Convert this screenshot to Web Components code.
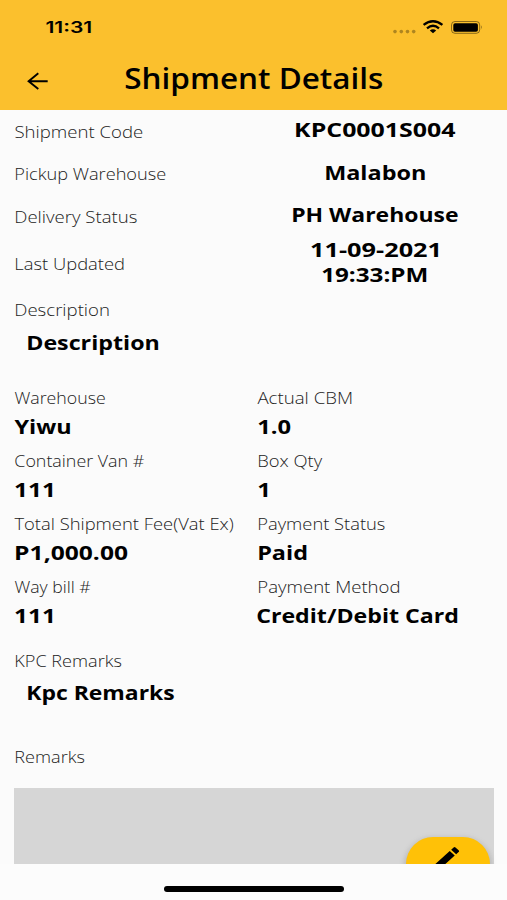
<!DOCTYPE html>
<html lang="en">
<head>
<meta charset="utf-8">
<title>Shipment Details</title>
<style>
html,body{margin:0;height:100%;background:#fbfbfb;overflow:hidden}
body{font-family:"Open Sans","Noto Sans",sans-serif;color:#000}
</style>
</head>
<body>
<shipment-app></shipment-app>
<script>
const define = (name, html, setup) => customElements.define(name, class extends HTMLElement {
  constructor() {
    super();
    this.attachShadow({mode: 'open'}).innerHTML = html;
  }
  connectedCallback() { if (setup) setup.call(this, this.shadowRoot); }
});

/* A line of text condensed or extended horizontally to the width in `w`. */
const ctx = document.createElement('canvas').getContext('2d');
define('fit-text', `<style>
:host{display:block;white-space:nowrap;flex:none;font-size:16.4px;font-weight:300;line-height:20px;color:#222}
:host([kind=value]){font-size:19px;font-weight:700;line-height:25px;color:#000}
:host([kind=title]){font-size:29px;font-weight:600;line-height:40px;color:#000}
:host([kind=clock]){font:600 16px/20px Inter,sans-serif;color:#000}
span{display:inline-block;transform-origin:0 50%}
</style><span></span>`, function (root) {
  const span = root.querySelector('span');
  const text = this.getAttribute('text');
  const w = +this.getAttribute('w');
  span.textContent = text;
  const cs = getComputedStyle(this);
  ctx.font = `${cs.fontWeight} ${cs.fontSize} ${cs.fontFamily}`;
  const m = ctx.measureText(text);
  const scale = (w - .7) / (m.actualBoundingBoxLeft + m.actualBoundingBoxRight);
  this.style.width = w + 'px';
  this.style.marginLeft = (this.getAttribute('x') || 0) + 'px';
  span.style.transform = `translateX(${m.actualBoundingBoxLeft * scale + .4}px) scaleX(${scale})`;
});

define('status-bar', `<style>
:host{display:flex;height:54px;padding:0 24px 0 45px;box-sizing:border-box;align-items:center;justify-content:space-between}
div{display:flex;align-items:center}
svg{display:block}
</style>
<fit-text kind="clock" text="11:31" w="46.5"></fit-text>
<div><svg width="92" height="20" viewBox="0 0 92 20">
<g fill="#000" opacity=".3"><circle cx="4" cy="14.6" r="1.8"/><circle cx="10.3" cy="14.6" r="1.8"/><circle cx="16.5" cy="14.6" r="1.8"/><circle cx="22.7" cy="14.6" r="1.8"/></g>
<g fill="none" stroke="#000" stroke-width="2.3"><path d="M32.6 7.9Q42 0.5 51.4 7.9"/><path d="M36 11.3Q42 6.3 48 11.3"/></g>
<path d="M38.8 13.4Q42 11 45.2 13.4L42 16.2Z"/>
<rect x="60.5" y="4.5" width="28.2" height="11.8" rx="3.4" fill="none" stroke="#000" stroke-opacity=".45"/>
<rect x="62.3" y="6.2" width="24.6" height="8.6" rx="1.8"/>
<path d="M90 8.2q1.8 2.1 0 4.2z" opacity=".5"/>
</svg></div>`);

define('app-header', `<style>
:host{display:block;height:110px;background:#fbc02d}
nav{display:flex;align-items:center;height:48px;padding-left:27px}
svg{display:block;flex:none;margin-top:5px}
</style>
<status-bar></status-bar>
<nav><svg width="21" height="18" viewBox="0 0 21 18" fill="none" stroke="#000" stroke-width="1.9"><path d="M20.7 9.2H1.8M11.3 1.2L1.6 9.2L11.3 17"/></svg>
<fit-text kind="title" text="Shipment Details" w="257.5" x="76.5"></fit-text></nav>`);

define('summary-row', `<style>
:host{display:grid;grid-template-columns:243px 236px;align-items:center;min-height:42.6px}
div{display:flex;flex-direction:column;align-items:center;padding-bottom:1.6px}
</style><slot name="label"></slot><div><slot></slot></div>`);

define('info-field', `<style>
:host{display:block;height:63px}
div{height:20px;margin-bottom:6.5px}
</style><div><slot name="label"></slot></div><slot></slot>`);

define('edit-button', `<style>
:host{display:block;width:84px;height:54px;border-radius:27px;background:#ffc107;box-shadow:0 3px 6px rgba(0,0,0,.18),0 2px 10px rgba(0,0,0,.08)}
svg{display:block;margin:0 0 0 25px;padding-top:6.5px;width:32px;height:29px}
</style><svg viewBox="0 0 24 24" preserveAspectRatio="none"><path d="M3 17.25V21h3.75L17.81 9.94l-3.75-3.75L3 17.25zM20.71 7.04a1 1 0 0 0 0-1.41l-2.34-2.34a1 1 0 0 0-1.41 0l-1.83 1.83 3.75 3.75 1.83-1.83z"/></svg>`);

const label = (t, w, x = 0) => `<fit-text slot="label" text="${t}" w="${w}" x="${x}"></fit-text>`;
const value = (t, w, x = 0) => `<fit-text kind="value" text="${t}" w="${w}" x="${x}"></fit-text>`;
const row = (l, ...v) => `<summary-row>${label(...l)}${v.map(a => value(...a)).join('')}</summary-row>`;
const field = (l, v) => `<info-field>${label(...l)}${value(...v)}</info-field>`;

define('shipment-app', `<style>
:host{display:block;width:507px;height:900px;background:#fbfbfb;overflow:hidden}
main{height:754px;box-sizing:border-box;padding:.3px 0 0 14px;overflow:hidden;position:relative}
.wide{display:flex;flex-direction:column;gap:10.5px}
.desc{margin-top:10.6px}
.grid{display:grid;grid-template-columns:243px 1fr;margin-top:32.6px}
.kpc{margin-top:10.4px}
.remarks{margin-top:40.5px}
.box{width:480px;height:100px;margin-top:21.6px;background:#d6d6d6}
edit-button{position:absolute;left:405.5px;top:727px}
footer{height:36px;display:flex;justify-content:center;align-items:center;padding-top:7px;box-sizing:border-box;background:#fcfcfc}
footer i{width:180px;height:5.5px;margin-top:7px;border-radius:3px;background:#000}
</style>
<app-header></app-header>
<main>
${row(['Shipment Code', 129.5], ['KPC0001S004', 161])}
${row(['Pickup Warehouse', 151.5, .5], ['Malabon', 101])}
${row(['Delivery Status', 122, .5], ['PH Warehouse', 166.5])}
${row(['Last Updated', 109.5, .5], ['11-09-2021', 127.5], ['19:33:PM', 105.5])}
<section class="wide desc">${label('Description', 94.5, .5)}${value('Description', 132.5, 13)}</section>
<section class="grid">
${field(['Warehouse', 92], ['Yiwu', 56])}
${field(['Actual CBM', 95], ['1.0', 33.5, 1])}
${field(['Container Van #', 130, .5], ['111', 37.5, 1])}
${field(['Box Qty', 65, .5], ['1', 9.5, 1])}
${field(['Total Shipment Fee(Vat Ex)', 219.5], ['P1,000.00', 113.5, 1])}
${field(['Payment Status', 127, .5], ['Paid', 49, .5])}
${field(['Way bill #', 77.5], ['111', 37.5, 1])}
${field(['Payment Method', 142, .5], ['Credit/Debit Card', 201, .2])}
</section>
<section class="wide kpc">${label('KPC Remarks', 106.5, .5)}${value('Kpc Remarks', 147.5, 13)}</section>
<section class="remarks">${label('Remarks', 69.5, .5)}</section>
<div class="box"></div>
<edit-button></edit-button>
</main>
<footer><i></i></footer>`);
</script>
</body>
</html>
